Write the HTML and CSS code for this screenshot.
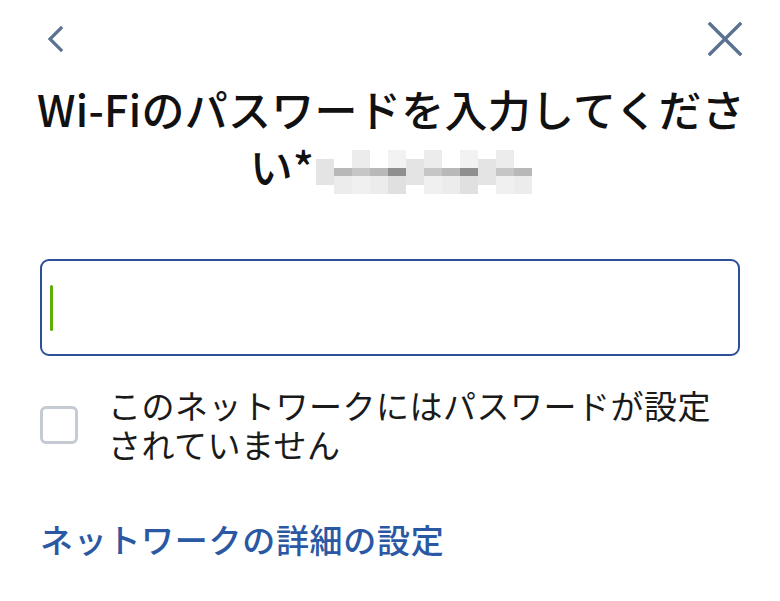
FILE: index.html
```html
<!DOCTYPE html>
<html lang="ja">
<head>
<meta charset="utf-8">
<link rel="stylesheet" href="styles.css">
</head>
<body>
<div class="page">
  <div class="topbar">
    <svg class="icon back" width="24" height="30" viewBox="0 0 24 30"><path d="M17 4 L6 15 L17 26" fill="none" stroke="#5b7391" stroke-width="3.2" stroke-linecap="square"/></svg>
    <svg class="icon close" width="34" height="34" viewBox="0 0 34 34"><path d="M2 2 L32 32 M32 2 L2 32" fill="none" stroke="#5b7391" stroke-width="3.4" stroke-linecap="square"/></svg>
  </div>
  <h1 class="title">Wi-Fiのパスワードを入力してください*<span class="ssid"><span class="px c1"></span><span class="px c2"></span><span class="px c3"></span><span class="px c2"></span><span class="px c4"></span><span class="px c1"></span><span class="px c3"></span><span class="px c2"></span><span class="px c4"></span><span class="px c1"></span><span class="px c3"></span><span class="px c2"></span></span></h1>
  <div class="field"><span class="caret"></span></div>
  <label class="check">
    <span class="box"></span>
    <span class="check-text">このネットワークにはパスワードが設定されていません</span>
  </label>
  <a class="link">ネットワークの詳細の設定</a>
</div>
</body>
</html>
```

FILE: styles.css
```css
html, body { margin: 0; padding: 0; background: #fff; }
body { font-family: "Noto Sans CJK JP", "Noto Sans", sans-serif; color: #1a1a1a; }
.page { width: 780px; height: 601px; box-sizing: border-box; padding: 0 40px; display: flex; flex-direction: column; }
.topbar { display: flex; justify-content: space-between; align-items: center; height: 80px; padding: 0 0 0 4px; margin-right: -2px; }
.icon { display: block; }
.back { margin-top: -2px; }
.close { margin-top: -2px; }
.title { margin: 0 -8px 0 -6px; font-size: 43px; font-weight: 500; line-height: 57px; text-align: center; letter-spacing: 0.3px; color: #111; }
.ssid { display: inline-flex; vertical-align: middle; height: 44px; margin-left: 2px; }
.px { display: block; width: 18px; height: 44px; background: #e6e6e6; }
.c1 { background: linear-gradient(#fff 0 20%, #e4e4e4 20% 80%, #fff 80%); }
.c2 { background: linear-gradient(#fff 0 40%, #b8b8b8 40% 60%, #ececec 60%); }
.c3 { background: linear-gradient(#ececec 0 40%, #c6c6c6 40% 60%, #f0f0f0 60%); }
.c4 { background: linear-gradient(#f2f2f2 0 40%, #8f8f8f 40% 60%, #e0e0e0 60%); }
.field { margin-top: 65px; height: 97px; box-sizing: border-box; border: 2px solid #2c4f96; border-radius: 9px; display: flex; align-items: center; padding-left: 8px; }
.caret { width: 3px; height: 46px; background: #5fae0a; border-radius: 2px; }
.check { display: flex; align-items: center; margin-top: 30px; padding-right: 16px; }
.box { flex: none; width: 38px; height: 38px; box-sizing: border-box; border: 3px solid #c5cbd3; border-radius: 6px; margin-right: 30px; }
.check-text { font-size: 33px; line-height: 39px; color: #1a1a1a; letter-spacing: 0.5px; }
.link { margin-top: 55px; font-size: 33px; line-height: 40px; color: #2b58a3; font-weight: 500; letter-spacing: 0.7px; }
```
